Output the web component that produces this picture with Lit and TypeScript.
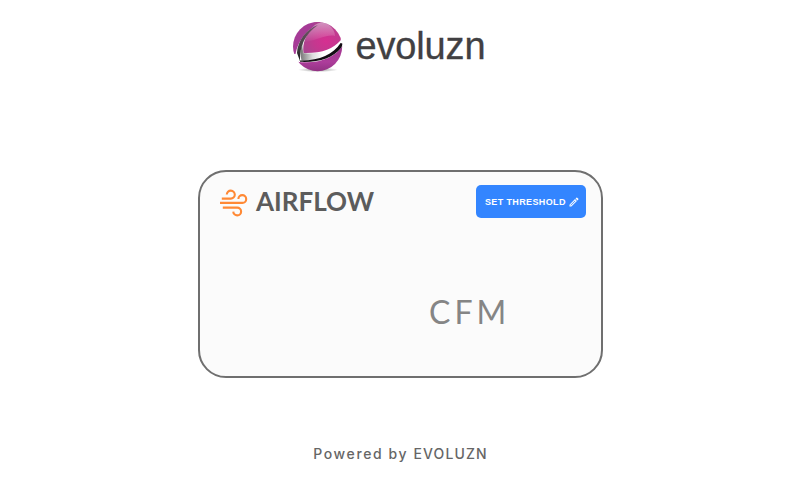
import { LitElement, html, css } from "lit";
import { customElement } from "lit/decorators.js";

@customElement("app-root")
export class AppRoot extends LitElement {
  static styles = css`
    :host {
      display: flex;
      flex-direction: column;
      align-items: center;
      box-sizing: border-box;
      height: 480px;
      padding-top: 16px;
      overflow: hidden;
      background: #fff;
    }
    .brand {
      display: flex;
      height: 60px;
      width: 228px;
    }
    .orb {
      flex: none;
      width: 64px;
      height: 60px;
    }
    .name {
      margin-left: 5.5px;
      font: 38px/60px "Liberation Sans", Arial, sans-serif;
      letter-spacing: -0.15px;
      -webkit-text-stroke: 0.3px #414042;
      color: #414042;
    }
    .card {
      box-sizing: border-box;
      width: 405px;
      height: 208px;
      margin: 94px 0 0 1px;
      border: 2px solid #6f6f6f;
      border-radius: 28px;
      background: #fbfbfb;
    }
    .head {
      display: flex;
      align-items: center;
      padding: 13px 15px 0 16px;
      height: 33px;
    }
    .wind {
      width: 34px;
      height: 34px;
      margin-top: 2px;
    }
    .title {
      margin-left: 6px;
      font: 700 26px/33px Lato, sans-serif;
      color: #5c5c5c;
    }
    .threshold {
      display: flex;
      align-items: center;
      box-sizing: border-box;
      width: 110px;
      height: 33px;
      margin: 0 0 0 auto;
      padding: 0 0 0 9px;
      border: 0;
      border-radius: 5px;
      background: #3385ff;
      color: #fff;
      font: 700 9px/33px "Liberation Sans", Arial, sans-serif;
      letter-spacing: 0.37px;
      white-space: nowrap;
    }
    .label {
      padding-top: 1px;
    }
    .pencil {
      flex: none;
      width: 12px;
      height: 12px;
      margin-left: 2px;
    }
    .unit {
      margin: 73px 0 0 229px;
      font: 32px/41px Lato, sans-serif;
      letter-spacing: 4px;
      color: #858585;
    }
    .foot {
      margin: 65px 0 0 1px;
      font: 500 14px/21px Inter, sans-serif;
      letter-spacing: 1.6px;
      color: #666;
    }
    .maker {
      letter-spacing: 1.1px;
    }
  `;

  render() {
    return html`
      <div class="brand">
        <svg class="orb" viewBox="0 0 64 60">
          <defs>
            <clipPath id="disc"><circle cx="31.6" cy="30.6" r="24.6" /></clipPath>
            <radialGradient id="ball" cx="0.6" cy="0.62" r="0.65">
              <stop offset="0" stop-color="#d62f91" />
              <stop offset="0.5" stop-color="#c4388f" />
              <stop offset="1" stop-color="#a9458f" />
            </radialGradient>
            <linearGradient id="shine" x1="0" y1="0" x2="0" y2="1">
              <stop offset="0" stop-color="#fff" stop-opacity="0.42" />
              <stop offset="1" stop-color="#fff" stop-opacity="0.02" />
            </linearGradient>
            <linearGradient id="ribbon" x1="0" y1="0" x2="1" y2="0">
              <stop offset="0" stop-color="#777" />
              <stop offset="0.3" stop-color="#ddd" />
              <stop offset="0.55" stop-color="#fff" />
            </linearGradient>
            <linearGradient id="sliver" x1="0" y1="0" x2="0" y2="1">
              <stop offset="0" stop-color="#75506b" />
              <stop offset="0.6" stop-color="#444" />
              <stop offset="1" stop-color="#181418" />
            </linearGradient>
            <linearGradient id="base" x1="0" y1="0" x2="0" y2="1">
              <stop offset="0" stop-color="#a2358f" />
              <stop offset="0.6" stop-color="#ad3d9b" />
              <stop offset="1" stop-color="#8c307e" />
            </linearGradient>
            <radialGradient id="shade">
              <stop offset="0" stop-color="#555" stop-opacity="0.6" />
              <stop offset="1" stop-color="#555" stop-opacity="0" />
            </radialGradient>
          </defs>
          <ellipse cx="32" cy="53.8" rx="20" ry="2.3" fill="url(#shade)" />
          <g clip-path="url(#disc)">
            <path d="M5 5H36L31 9.5C20 14 12 25 9.5 38L5 38Z" fill="#a63b96" />
            <path d="M27 5H45C54 11 57 18 54.5 24.5C47 33 36 37.5 17.5 37C16 28 20 17 29 10Z" fill="url(#ball)" />
            <path d="M25 13C31 5 38 6 43 9C47 12 49 16 49 20C41 18 33 24 18.5 26C20 20 22 16 25 13Z" fill="url(#shine)" />
            <path d="M16.5 27C14 33 14 39 15.5 44.5C34 45 47 39 55 26.5C46 35 34 38 17.5 37.3C16.5 33 16.3 30 16.5 27Z" fill="url(#ribbon)" />
            <path d="M10 45.4C31 48.6 48 42.5 57 29.5V57H10Z" fill="url(#base)" />
          </g>
          <path d="M32 9C20 13 11.5 25 11 37L14 45C13.5 30 19 18 32 9Z" fill="url(#sliver)" />
          <path d="M13.6 44.4C32 45 47 39 54.6 27L56.3 27.5C56.3 29 56 30.5 55 32C47 42 33 46.6 14.2 45.8Z" fill="#130d13" />
        </svg>
        <span class="name">evoluzn</span>
      </div>
      <section class="card">
        <div class="head">
          <svg class="wind" viewBox="0 0 34 34" fill="none" stroke="#ff8935" stroke-width="2.1">
            <path d="M5.8 12.6H14.6A4 4 0 1 0 10.8 8.6" />
            <path d="M4 16.9H26.4A3.9 3.9 0 1 0 22.4 13" />
            <path d="M6.8 21.6H21.2A3.9 3.9 0 1 1 17.3 25.6" />
          </svg>
          <span class="title">AIRFLOW</span>
          <button class="threshold">
            <span class="label">SET THRESHOLD</span>
            <svg class="pencil" viewBox="0 0 24 24" fill="#fff">
              <path d="M14.06 9.02l.92.92L5.92 19H5v-.92l9.06-9.06M17.66 3c-.25 0-.51.1-.7.29l-1.83 1.83 3.75 3.75 1.83-1.83c.39-.39.39-1.02 0-1.41l-2.34-2.34c-.2-.2-.45-.29-.71-.29zm-3.6 3.19L3 17.25V21h3.75L17.81 9.94l-3.75-3.75z" />
            </svg>
          </button>
        </div>
        <div class="unit">CFM</div>
      </section>
      <div class="foot">Powered by <span class="maker">EVOLUZN</span></div>
    `;
  }
}
